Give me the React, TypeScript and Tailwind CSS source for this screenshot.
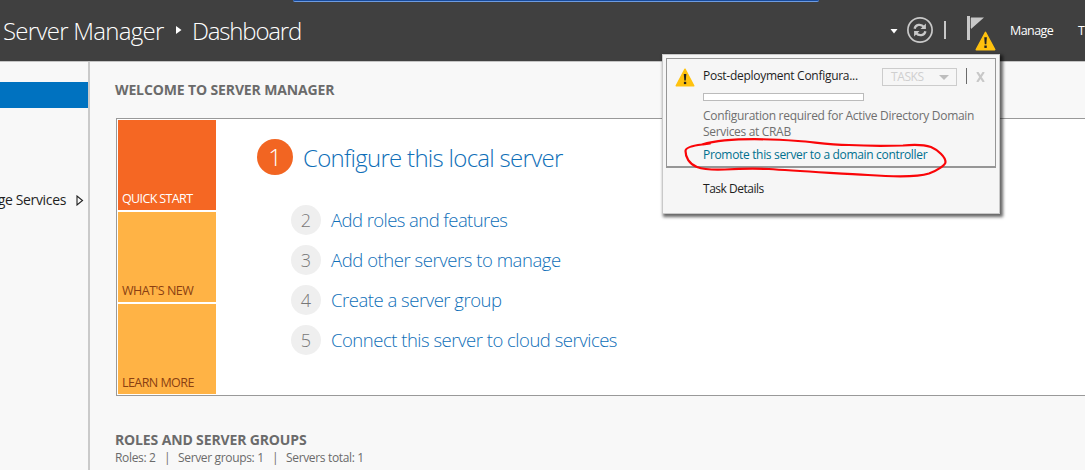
import React from "react";

const tiles = [
  { label: "QUICK START", style: "bg-[#f56723] text-white tracking-[-0.63px]" },
  { label: "WHAT'S NEW", style: "bg-[#ffb345] text-[#8a3f12] tracking-[-0.5px]" },
  { label: "LEARN MORE", style: "bg-[#ffb345] text-[#8a3f12] tracking-[-0.56px]" },
];

const steps = [
  { n: 2, label: "Add roles and features", track: "tracking-[-0.57px]" },
  { n: 3, label: "Add other servers to manage", track: "tracking-[-0.45px]" },
  { n: 4, label: "Create a server group", track: "tracking-[-0.48px]" },
  { n: 5, label: "Connect this server to cloud services", track: "tracking-[-0.49px]" },
];

function Warning({ className }: { className: string }) {
  return (
    <svg viewBox="0 0 20 19" className={className}>
      <path d="M10 1.2 L18.8 17.8 H1.2 Z" fill="#ffc20e" stroke="#ffc20e" strokeWidth="1.4" strokeLinejoin="round" />
      <path d="M8.8 6 h2.5 l-.5 6.6 h-1.5 Z" fill="#222" />
      <rect x="8.9" y="13.8" width="2.3" height="2.3" fill="#222" />
    </svg>
  );
}

function Header() {
  return (
    <header className="relative flex h-[62px] shrink-0 border-b border-[#c4c4c4] bg-[#404040] text-white">
      <div className="absolute left-[293px] top-0 h-[2px] w-[526px] rounded-b-sm border-b border-[#6d9be0] bg-[#174a9c]" />
      <div className="flex h-[62px] w-[891px] items-center pl-[3px] text-[24px] font-light leading-[32px]">
        <span className="w-[173px] tracking-[-0.72px]">Server Manager</span>
        <svg viewBox="0 0 6 8" className="mb-[2px] h-[8px] w-[6px]"><path d="M0 0 L5.5 4 L0 8 Z" fill="#fff" /></svg>
        <span className="ml-[10px] tracking-[-1.18px]">Dashboard</span>
      </div>
      <svg viewBox="0 0 8 5" className="mt-[29px] h-[5px] w-[8px] shrink-0"><path d="M.5 0 H7.5 L4 4.5 Z" fill="#fff" /></svg>
      <svg viewBox="0 0 26 26" className="ml-[9px] mt-[17px] h-[26px] w-[26px] shrink-0" fill="none" stroke="#c8c8c8">
        <circle cx="13" cy="13" r="12.1" strokeWidth="1.7" />
        <g strokeWidth="2.3">
          <path d="M7.6 11.8 C8.4 7.4 14 6.4 17 10" />
          <path d="M18.4 14.2 C17.6 18.6 12 19.6 9 16" />
        </g>
        <path d="M18.9 6.6 V12 H13.5 Z M7.1 19.4 V14 H12.5 Z" fill="#c8c8c8" stroke="none" />
      </svg>
      <div className="ml-[11px] mt-[21px] h-[18px] w-[2px] shrink-0 bg-[#c8c8c8]" />
      <div className="relative ml-[21px] mt-[16px] h-[36px] w-[30px] shrink-0">
        <svg viewBox="0 0 18 25" className="h-[25px] w-[18px]">
          <path d="M0 0 H3 V24 H0 Z M4 1.5 H17 L4 13 Z" fill="#c8c8c8" />
          <path d="M3.5 2 V12" stroke="#666" strokeWidth=".8" />
        </svg>
        <div className="absolute left-[8px] top-[15px]">
          <Warning className="h-[20px] w-[21px]" />
        </div>
      </div>
      <span className="ml-[13px] mt-[22px] w-[68px] shrink-0 text-[12.5px] leading-[18px] tracking-[-0.6px]">Manage</span>
      <span className="mt-[22px] text-[12.5px] leading-[18px]">T</span>
    </header>
  );
}

function Sidebar() {
  return (
    <aside className="flex w-[90px] shrink-0 flex-col border-r-2 border-[#cacaca]">
      <div className="mt-[20px] h-[26px] bg-[#0072c0]" />
      <div className="mt-[82px] flex h-[20px] items-center justify-end overflow-hidden pr-[4px] text-[#1f1f1f]">
        <span className="shrink-0 whitespace-nowrap text-[14px] leading-[20px] tracking-[-0.35px]">ge Services</span>
        <svg viewBox="0 0 8 11" className="ml-[10px] h-[11px] w-[8px] shrink-0"><path d="M1 1 V10 L6.5 5.5 Z" fill="none" stroke="#222" strokeWidth="1.1" /></svg>
      </div>
    </aside>
  );
}

function Notifications() {
  return (
    <div className="absolute left-[662px] top-[54px] h-[160px] w-[338px] border border-[#c9c9c9] bg-[#f6f6f6] p-[3px] text-[12px] leading-[16px] shadow-[2px_2px_3px_1px_rgba(0,0,0,0.6)]">
      <div className="flex h-[110px] border border-b-2 border-[#969696]">
        <div className="w-[36px] shrink-0 pl-[8px] pt-[9px]">
          <Warning className="h-[19px] w-[20px]" />
        </div>
        <div className="flex-1">
          <div className="flex h-[34px] pt-[9px]">
            <span className="w-[179px] tracking-[-0.28px] text-[#1e1e1e]">Post-deployment Configura...</span>
            <div className="flex h-[18px] w-[75px] items-center justify-between border border-[#cccccc] pl-[8px] pr-[7px] text-[#cfcfcf]">
              <span className="tracking-[-0.4px]">TASKS</span>
              <svg viewBox="0 0 10 5" className="h-[5px] w-[10px]"><path d="M0 0 H10 L5 5 Z" fill="#bdbdbd" /></svg>
            </div>
            <div className="ml-[9px] h-[16px] w-px bg-[#6b6b6b]" />
            <svg viewBox="0 0 9 10" className="ml-[9px] mt-[4px] h-[10px] w-[9px]"><path d="M1.2 0 L7.8 10 M7.8 0 L1.2 10" stroke="#c8c8c8" strokeWidth="2.2" /></svg>
          </div>
          <div className="h-[8px] w-[161px] border border-[#bbb] bg-white" />
          <div className="mt-[7px] whitespace-nowrap text-[#6f6f6f]">
            <div className="tracking-[-0.29px]">Configuration required for Active Directory Domain</div>
            <div className="tracking-[-0.32px]">Services at CRAB</div>
          </div>
          <div className="mt-[7px] whitespace-nowrap tracking-[-0.33px] text-[#00708f]">Promote this server to a domain controller</div>
        </div>
      </div>
      <div className="pl-[37px] pt-[13px] tracking-[-0.48px] text-[#1e1e1e]">Task Details</div>
      <svg viewBox="0 0 270 46" className="absolute left-[18px] top-[82px] h-[46px] w-[270px]" fill="none" stroke="#fa0508" strokeWidth="2.2" strokeLinecap="round" strokeLinejoin="round">
        <path d="M22 7.5 L29 6.5 L21 7.5 C13 8.5 4.5 10.5 4.5 14 C4.5 20 8 27 16 30 C24 33 32 33 44 32.5 C62 31.5 74 31.5 88 32 C113 34 155 36 187 38 C208 39.5 234 41 248 36.5 C257 33 264.5 28 264.5 25 C264.5 20 257 13 250 10 C244 8 233 7.5 222 8.5 C204 9 185 9 168 8 C145 7.5 133 5 117 4 C90 2 48 0 21 7.5" />
      </svg>
    </div>
  );
}

export default function App() {
  return (
    <div className="relative flex h-[470px] w-[1085px] flex-col overflow-hidden bg-[#f8f8f8] font-['Open_Sans','Noto_Sans',sans-serif]">
      <Header />
      <div className="flex min-h-0 flex-1">
        <Sidebar />
        <main className="flex min-w-0 flex-1 flex-col pl-[25px] text-[#6b6b6b]">
          <h1 className="mt-[18px] text-[14px] font-bold leading-[20px] tracking-[-0.13px]">WELCOME TO SERVER MANAGER</h1>
          <section className="ml-px mt-[18px] flex h-[278px] shrink-0 border border-r-0 border-[#999] bg-white p-px">
            <div className="flex w-[98px] flex-col gap-[2px]">
              {tiles.map((t) => (
                <div key={t.label} className={"flex h-[90px] items-end pb-[3px] pl-[4px] text-[12.5px] leading-[16px] " + t.style}>{t.label}</div>
              ))}
            </div>
            <div className="pl-[41px] pt-[19px] font-light text-[#0f6fb8]">
              <div className="flex h-[36px] items-center">
                <div className="flex size-[36px] items-center justify-center rounded-full bg-[#f26522] text-[24px] text-white">1</div>
                <span className="ml-[10px] mt-[2px] text-[24px] leading-[32px] tracking-[-0.71px]">Configure this local server</span>
              </div>
              <div className="ml-[34px] mt-[30px] flex flex-col gap-[10px]">
                {steps.map((s) => (
                  <div key={s.n} className="flex h-[30px] items-center">
                    <div className="flex size-[30px] items-center justify-center rounded-full bg-[#efefef] text-[18px] leading-[24px] text-[#777]">{s.n}</div>
                    <span className={"ml-[10px] text-[18.5px] leading-[24px] " + s.track}>{s.label}</span>
                  </div>
                ))}
              </div>
            </div>
          </section>
          <h2 className="mt-[34px] text-[14px] font-bold leading-[20px] tracking-[-0.14px]">ROLES AND SERVER GROUPS</h2>
          <div className="flex text-[12px] leading-[16px] tracking-[-0.34px]">
            <span className="w-[49px]">Roles: 2</span>
            <span className="w-[14px]">|</span>
            <span className="w-[94px]">Server groups: 1</span>
            <span className="w-[14px]">|</span>
            <span>Servers total: 1</span>
          </div>
        </main>
      </div>
      <Notifications />
    </div>
  );
}
